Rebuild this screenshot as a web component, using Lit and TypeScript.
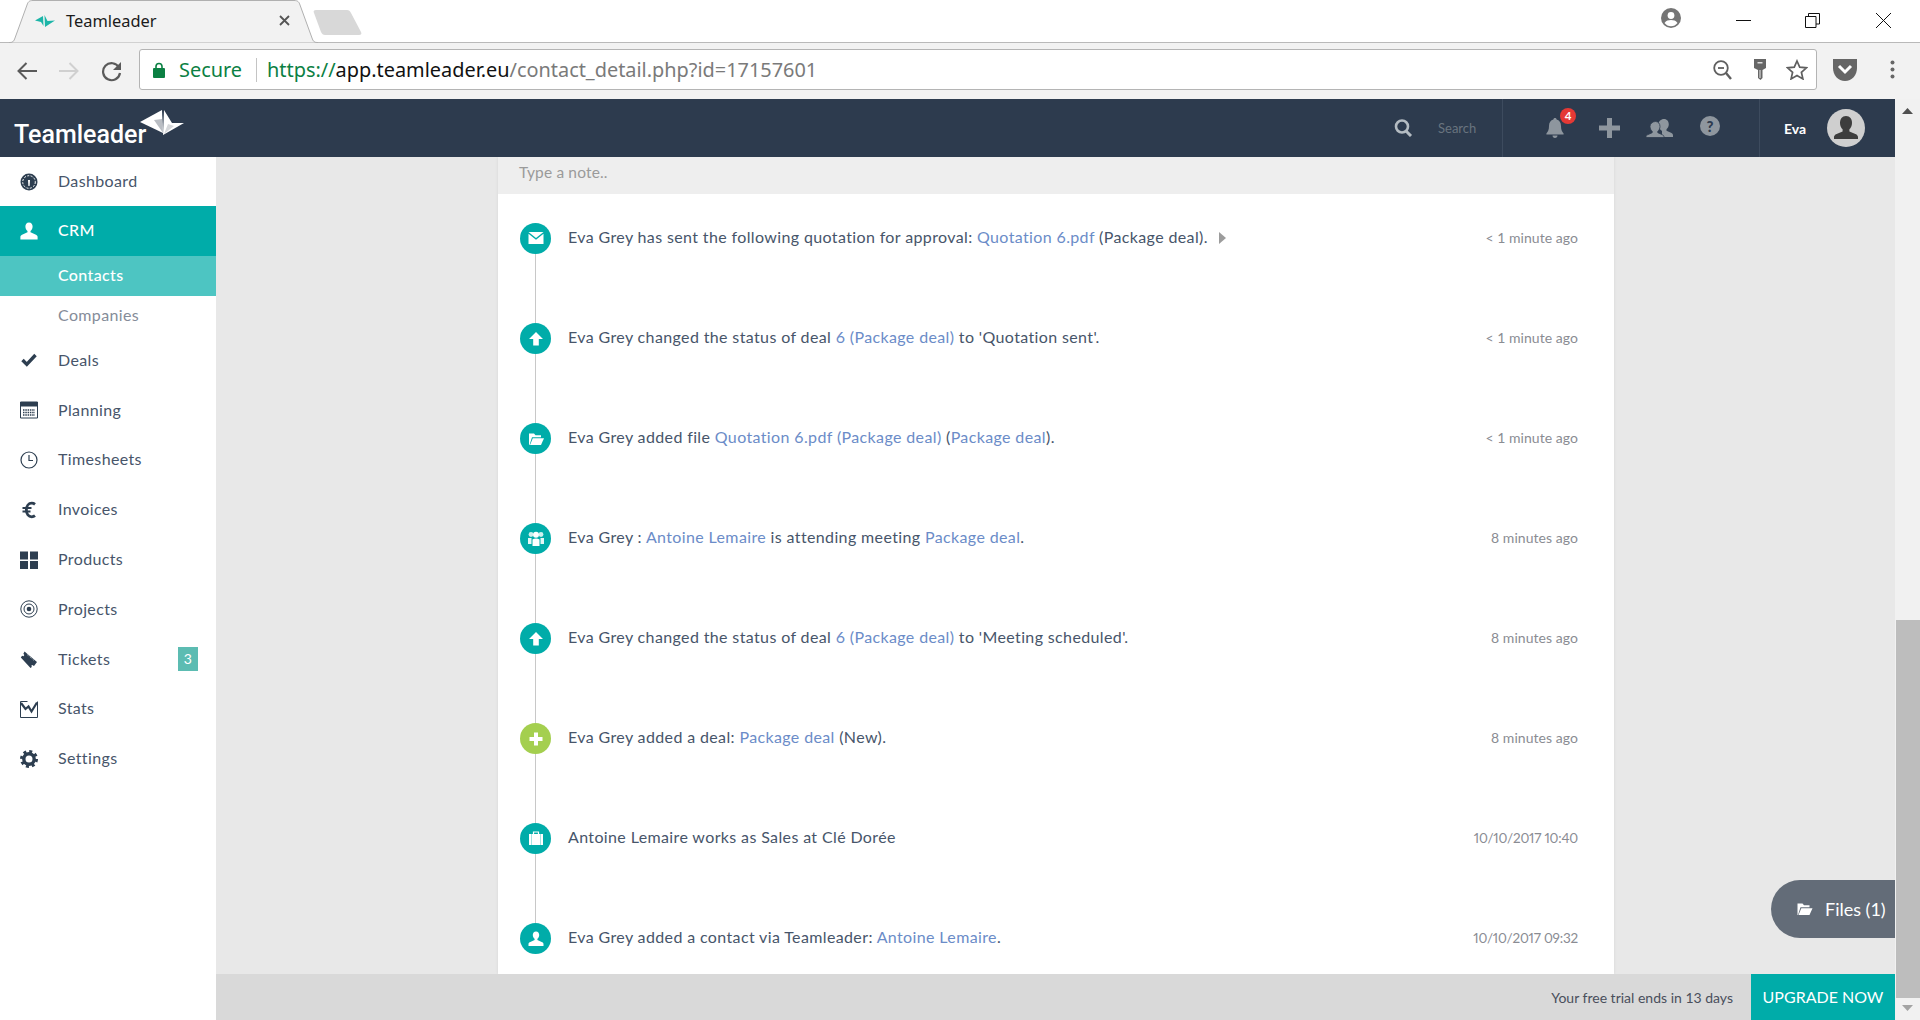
import { LitElement, html, svg, css } from 'lit';
import { customElement } from 'lit/decorators.js';

const navIcons: Record<string, unknown> = {
  dashboard: svg`<circle cx="9" cy="9" r="8.5" fill="currentColor"/><circle cx="9" cy="9" r="6.3" fill="none" stroke="#fff" stroke-width="1" stroke-dasharray="2 1.4"/><path d="M8 7h2l-.4 6h-1.2z" fill="#fff"/>`,
  user: svg`<path d="M9 0.5c2.4 0 3.6 1.8 3.6 4 0 2-1 3.6-2.1 4.4v1.3l5.5 2.6c1 .5 1.6 1.3 1.6 2.2v2.5H.4V15c0-.9.6-1.7 1.6-2.2l5.5-2.6V8.900C6.400 8.100 5.400 6.500 5.400 4.500c0-2.200 1.200-4 3.600-4z" fill="currentColor"/>`,
  check: svg`<path d="M2.500 9l4.300 4.400L15.500 4" fill="none" stroke="currentColor" stroke-width="3.400"/>`,
  planning: svg`<path d="M.5 1h17v16H.5z" fill="none" stroke="currentColor" stroke-width="1"/><path d="M0 1h18v4.500H0z" fill="currentColor"/><path d="M3 9h12M3 11.500h12M3 14h12" stroke="currentColor" stroke-width="1.400" stroke-dasharray="1.500 .8"/>`,
  clock: svg`<circle cx="9" cy="9" r="8" fill="none" stroke="currentColor" stroke-width="1.200"/><path d="M9 4v5.500h4" fill="none" stroke="currentColor" stroke-width="1.200"/>`,
  euro: svg`<path d="M15 3.300C14 2.500 13 2.200 11.800 2.200 8.600 2.200 6.400 5 6.400 9s2.200 6.800 5.400 6.800c1.200 0 2.300-.4 3.200-1.100" fill="none" stroke="currentColor" stroke-width="2.800"/><path d="M2.500 7h9M2.500 10.500h8" stroke="currentColor" stroke-width="1.800"/>`,
  grid: svg`<path d="M0 .5h8v8H0zM10 .5h8v8h-8zM0 10h8v8H0zM10 10h8v8h-8z" fill="currentColor"/>`,
  target: svg`<circle cx="9" cy="9" r="8.200" fill="none" stroke="currentColor" stroke-width="1"/><circle cx="9" cy="9" r="5" fill="none" stroke="currentColor" stroke-width="1"/><circle cx="9" cy="9" r="2.300" fill="currentColor"/>`,
  ticket: svg`<path d="M4.500 1.500l12.500 10.500-3 4-1.800-1-.8.600.4 1.400-1.300.900L.8 7.500l1.300-1.800 1.400.6.800-1.300-.9-1.300z" fill="currentColor"/><path d="M7 4.500l7 6" stroke="#fff" stroke-width=".6" stroke-dasharray="1 1"/>`,
  stats: svg`<path d="M.5 1.500V17.500H17.500V1.500" fill="none" stroke="currentColor" stroke-width="1"/><path d="M.5 1.500h7" stroke="currentColor" stroke-width="1"/><path d="M1 3l4.500 6 3-2.500 3 5 5.500-9" fill="none" stroke="currentColor" stroke-width="2.200"/>`,
  gear: svg`<circle cx="9" cy="9" r="7.400" fill="none" stroke="currentColor" stroke-width="3.200" stroke-dasharray="2.900 2.910"/><circle cx="9" cy="9" r="5.200" fill="none" stroke="currentColor" stroke-width="3.400"/>`,
};

const feedIcons: Record<string, unknown> = {
  mail: svg`<path d="M.5 1h15L8 7z" fill="#fff"/><path d="M.5 2.800V13h15V2.800L8 8.800z" fill="#fff"/>`,
  up: svg`<path d="M8 1l7 7h-4.200v6.500H5.200V8H1z" fill="#fff"/>`,
  folder: svg`<path d="M1 14V2.500h5l1.500 1.800H13v2H4L1.500 14z" fill="#fff"/><path d="M4.800 7.300H16L13 14H2z" fill="#fff"/>`,
  group: svg`<circle cx="3" cy="3.500" r="2.400" fill="#cdf0ee"/><circle cx="13" cy="3.500" r="2.400" fill="#cdf0ee"/><path d="M0 7h3.500v6H0zM12.500 7H16v6h-3.500z" fill="#e4f7f6"/><circle cx="8" cy="3.800" r="3" fill="#fff"/><path d="M4.500 8.500c1-.7 2.200-1 3.500-1s2.500.3 3.500 1V15h-7z" fill="#fff"/>`,
  plus: svg`<path d="M6 1.500h4V6h4.500v4H10v4.500H6V10H1.500V6H6z" fill="#fff"/>`,
  case: svg`<path d="M5.500 3V1h5v2" fill="none" stroke="#fff" stroke-width="1.200"/><path d="M1 3h14v11H1z" fill="#fff"/><path d="M3 3h1v11H3zM12 3h1v11h-1z" fill="#00aca9" opacity=".35"/>`,
  user: svg`<path d="M8 .5c2.100 0 3.200 1.600 3.200 3.500 0 1.800-.9 3.100-1.800 3.800v1.200l4.800 2.300c.9.400 1.300 1.100 1.300 1.900v1.800H.5v-1.800c0-.8.4-1.500 1.300-1.900l4.800-2.300V7.800C5.700 7.100 4.800 5.800 4.800 4 4.800 2.100 5.900.5 8 .5z" fill="#fff"/>`,
};

const link = (t: string) => html`<a class="link">${t}</a>`;

const menu = [
  { label: 'Deals', icon: 'check' },
  { label: 'Planning', icon: 'planning' },
  { label: 'Timesheets', icon: 'clock' },
  { label: 'Invoices', icon: 'euro' },
  { label: 'Products', icon: 'grid' },
  { label: 'Projects', icon: 'target' },
  { label: 'Tickets', icon: 'ticket', badge: '3' },
  { label: 'Stats', icon: 'stats' },
  { label: 'Settings', icon: 'gear' },
];

const feed = [
  { icon: 'mail', time: '< 1 minute ago', body: html`Eva Grey has sent the following quotation for approval: ${link('Quotation 6.pdf')} (Package deal).<span class="caret"></span>` },
  { icon: 'up', time: '< 1 minute ago', body: html`Eva Grey changed the status of deal ${link('6 (Package deal)')} to 'Quotation sent'.` },
  { icon: 'folder', time: '< 1 minute ago', body: html`Eva Grey added file ${link('Quotation 6.pdf (Package deal)')} (${link('Package deal')}).` },
  { icon: 'group', time: '8 minutes ago', body: html`Eva Grey : ${link('Antoine Lemaire')} is attending meeting ${link('Package deal')}.` },
  { icon: 'up', time: '8 minutes ago', body: html`Eva Grey changed the status of deal ${link('6 (Package deal)')} to 'Meeting scheduled'.` },
  { icon: 'plus', time: '8 minutes ago', green: true, body: html`Eva Grey added a deal: ${link('Package deal')} (New).` },
  { icon: 'case', time: '10/10/2017 10:40', date: true, body: html`Antoine Lemaire works as Sales at Clé Dorée` },
  { icon: 'user', time: '10/10/2017 09:32', date: true, body: html`Eva Grey added a contact via Teamleader: ${link('Antoine Lemaire')}.` },
];

@customElement('app-root')
export class AppRoot extends LitElement {
  static styles = css`
    :host {
      display: flex;
      flex-direction: column;
      width: 100%;
      height: 1020px;
      overflow: hidden;
      font-family: Lato, sans-serif;
      color: #47556a;
    }
    svg { display: block; flex: none; }

    .tabstrip {
      display: flex;
      height: 43px;
      flex: none;
      background: #fff;
      border-bottom: 1px solid #b9b9b9;
      box-sizing: border-box;
    }
    .tab {
      position: relative;
      width: 309px;
      height: 43px;
      margin-left: 9px;
      display: flex;
      align-items: center;
      padding: 0 28px 0 26px;
      box-sizing: border-box;
      font: 16.400px 'Noto Sans', sans-serif;
      color: #1b1b1b;
    }
    .tab-shape { position: absolute; left: 0; top: 0; }
    .favicon { position: relative; margin: -2px 11px 0 0; }
    .tab-title { position: relative; margin-top: -2px; flex: 1; }
    .tab-close { position: relative; margin-top: -2px; }
    .new-tab { margin: 10px 0 0 -5px; }
    .win { margin-left: auto; display: flex; padding-right: 29px; }
    .win-profile { margin: 8px 55px 0 0; }
    .win-min { margin: 13px 54px 0 0; }
    .win-restore { margin: 13px 56px 0 0; }
    .win-close { margin-top: 13px; }

    .toolbar {
      display: flex;
      align-items: center;
      height: 56px;
      flex: none;
      background: #f2f2f2;
      font: 19.900px 'Noto Sans', sans-serif;
      padding-left: 16px;
      box-sizing: border-box;
    }
    .tb-forward { margin-left: 22px; }
    .tb-reload { margin: 0 17px 0 21px; }
    .omnibox {
      display: flex;
      align-items: center;
      width: 1678px;
      height: 41px;
      background: #fff;
      border: 1px solid #b4b4b4;
      border-radius: 3px;
      box-sizing: border-box;
      padding-left: 13px;
      margin-top: -3px;
    }
    .secure { color: #0b8043; margin-left: 14px; }
    .omni-sep { width: 1px; height: 24px; background: #c4c4c4; margin: 0 10px 0 14px; }
    .scheme { color: #0b8043; }
    .host { color: #111; }
    .path { color: #7a7a7a; }
    .omni-right { margin-left: auto; display: flex; align-items: center; gap: 19px; padding-right: 8px; }
    .omni-zoom { margin-right: 2px; }
    .pocket { margin: -3px 0 0 16px; }
    .dots { margin: -3px 0 0 33px; }

    .body { flex: 1; display: flex; min-height: 0; }
    .app { flex: 1; display: flex; flex-direction: column; min-width: 0; }

    .header {
      display: flex;
      align-items: stretch;
      height: 58px;
      flex: none;
      background: #2d3b4e;
    }
    .logo {
      position: relative;
      width: 1380px;
      padding: 19px 0 0 14px;
      box-sizing: border-box;
      font: 500 25px/34px Roboto, sans-serif;
      color: #fff;
    }
    .logo-mark { position: absolute; left: 140px; top: 11px; }
    .search {
      width: 122px;
      display: flex;
      align-items: center;
      gap: 24px;
      padding-left: 14px;
      box-sizing: border-box;
      font-size: 13px;
      color: #69747f;
    }
    .actions {
      width: 258px;
      display: flex;
      align-items: center;
      border-left: 1px solid #3d4b5e;
      border-right: 1px solid #3d4b5e;
      padding-left: 43px;
      box-sizing: border-box;
      position: relative;
    }
    .bell { position: relative; margin-right: 35px; }
    .bell-badge {
      position: absolute;
      left: 14px;
      top: -10px;
      width: 16px;
      height: 16px;
      border-radius: 50%;
      background: #e53935;
      color: #fff;
      font: 700 11.500px/16px Lato, sans-serif;
      text-align: center;
    }
    .plus { margin-right: 26px; }
    .people { margin-right: 27px; }
    .help { margin-top: -5px; }
    .user {
      flex: 1;
      display: flex;
      align-items: center;
      padding-left: 24px;
      gap: 21px;
      color: #fff;
      font-size: 14px;
      font-weight: 700;
    }
    .avatar {
      width: 38px;
      height: 38px;
      border-radius: 50%;
      background: #cfcfcf;
      overflow: hidden;
    }

    .main { flex: 1; display: flex; min-height: 0; }
    .sidebar {
      width: 216px;
      flex: none;
      background: #fff;
      font-size: 16px;
      letter-spacing: 0.37px;
    }
    .label { margin-top: -2px; }
    .item {
      display: flex;
      align-items: center;
      height: 49.800px;
      padding: 0 18px 0 20px;
      color: #47556a;
    }
    .item svg { color: #2d3e50; margin-right: 20px; }
    .item.first { height: 49px; }
    .item.active { height: 50px; background: #00aca9; color: #fff; font-weight: 500; }
    .item.active svg { color: #fff; }
    .item.active .label, .sub.active .label { margin-top: -3px; }
    .sub { display: flex; align-items: center; height: 39.500px; padding-left: 58px; color: #858c99; }
    .sub.active { height: 40px; background: #4dc5c2; color: #fff; font-weight: 500; }
    .nav-badge {
      margin-left: auto;
      width: 20px;
      height: 24px;
      background: #5cbcb2;
      color: #fff;
      font-size: 14px;
      line-height: 24px;
      text-align: center;
    }

    .column { flex: 1; display: flex; flex-direction: column; min-width: 0; }
    .content {
      position: relative;
      flex: 1;
      min-height: 0;
      overflow: hidden;
      background: #e8e8e8;
      padding-left: 282px;
    }
    .panel {
      width: 1116px;
      height: 100%;
      background: #fff;
      box-shadow: 0 0 3px rgba(0, 0, 0, 0.08);
    }
    .note {
      height: 37px;
      background: #eee;
      padding-left: 21px;
      font-size: 15.500px;
      letter-spacing: 0.15px;
      line-height: 31px;
      color: #9a9a9a;
    }
    .feed { padding-top: 29px; }
    .row {
      position: relative;
      display: flex;
      height: 100px;
      padding: 0 36px 0 22px;
      font-size: 16px;
      letter-spacing: 0.37px;
      line-height: 31px;
    }
    .row:not(:last-child)::after {
      content: '';
      position: absolute;
      left: 37px;
      top: 31px;
      bottom: 0;
      width: 1px;
      background: #c8c8c8;
    }
    .dot {
      width: 31px;
      height: 31px;
      flex: none;
      border-radius: 50%;
      background: #00aca9;
      display: flex;
      align-items: center;
      justify-content: center;
      margin-right: 17px;
    }
    .dot.green { background: #a4cf4f; }
    .text { flex: 1; margin-top: -2px; white-space: nowrap; }
    .link { color: #6b8cc8; }
    .caret {
      display: inline-block;
      width: 0;
      height: 0;
      margin-left: 11px;
      border-left: 7px solid #9c9c9c;
      border-top: 6px solid transparent;
      border-bottom: 6px solid transparent;
      vertical-align: -1px;
    }
    .time {
      margin-top: -1px;
      color: #8a8c93;
      font-size: 14px;
      letter-spacing: 0.05px;
      white-space: nowrap;
    }
    .time.date { margin-top: 0; font-size: 13.500px; letter-spacing: -0.2px; font-variant-numeric: proportional-nums; }

    .files {
      position: absolute;
      right: 0;
      top: 723px;
      width: 124px;
      height: 58px;
      display: flex;
      align-items: center;
      box-sizing: border-box;
      padding-left: 25px;
      gap: 11px;
      background: #636c78;
      border-radius: 29px 0 0 29px;
      color: #fff;
      font-size: 18px;
    }
    .trial {
      display: flex;
      justify-content: flex-end;
      align-items: center;
      height: 46px;
      flex: none;
      background: #d9d9d9;
      font-size: 14px;
      color: #4a4f5c;
    }
    .upgrade {
      width: 144px;
      height: 100%;
      margin-left: 18px;
      background: #00aca9;
      color: #fff;
      font-size: 16px;
      line-height: 46px;
      text-align: center;
    }

    .scrollbar {
      width: 25px;
      flex: none;
      display: flex;
      flex-direction: column;
      background: #f1f1f1;
    }
    .sb-up { margin: 9px 0 0 7px; }
    .sb-thumb { margin: auto 0 0 1px; height: 378px; background: #bdbdbd; }
    .sb-down { margin: 7px 0 9px 7px; }
  `;

  render() {
    return html`
      <div class="tabstrip">
        <div class="tab">
          <svg class="tab-shape" width="309" height="43">
            <path d="M0 42.500H1C4 42.500 5 41 6 38L18 5C19 2 20 .5 24 .5H285C289 .5 290 2 291 5L303 38C304 41 305 42.500 308 42.500H309V43H0z" fill="#f2f2f2" stroke="#b0b0b0"/>
          </svg>
          <svg class="favicon" width="20" height="12" viewBox="0 0 20 12">
            <path d="M0 5.500L8 1l.5 10L6 7z" fill="#1cb5a8"/><path d="M9.500 0L12.500 6 20 5.500 10 12z" fill="#1cb5a8"/>
          </svg>
          <span class="tab-title">Teamleader</span>
          <svg class="tab-close" width="11" height="11"><path d="M1 1l9 9M10 1l-9 9" stroke="#555" stroke-width="1.800"/></svg>
        </div>
        <svg class="new-tab" width="50" height="26">
          <path d="M3 0H34C36 0 37 1 38 3L48 22C49 24 48 25 46 25H12C10 25 9 24 8 22L1 3C0 1 1 0 3 0z" fill="#d8d8d8"/>
        </svg>
        <div class="win">
          <svg class="win-profile" width="20" height="20">
            <circle cx="10" cy="10" r="10" fill="#757575"/><circle cx="10" cy="7.500" r="3.400" fill="#fff"/><path d="M3.500 15c1.500-2.400 4-3 6.500-3s5 .6 6.500 3c-1.500 2-4 3.300-6.500 3.300S5 17 3.500 15z" fill="#fff"/>
          </svg>
          <svg class="win-min" width="15" height="15"><path d="M0 7.500h15" stroke="#111"/></svg>
          <svg class="win-restore" width="15" height="15">
            <path d="M.5 3.500h10.500v11H.5zM3.500 3V.5h11V11H11" fill="none" stroke="#111"/>
          </svg>
          <svg class="win-close" width="15" height="15"><path d="M0 0l15 15M15 0L0 15" stroke="#111"/></svg>
        </div>
      </div>

      <div class="toolbar">
        <svg width="21" height="20" viewBox="0 0 21 20"><path d="M21 10H3M10.500 2L2.500 10l8 8" fill="none" stroke="#5a5a5a" stroke-width="2"/></svg>
        <svg class="tb-forward" width="21" height="20" viewBox="0 0 21 20"><path d="M0 10h18M10.500 2l8 8-8 8" fill="none" stroke="#d0d0d0" stroke-width="2"/></svg>
        <svg class="tb-reload" width="21" height="21" viewBox="0 0 21 21">
          <path d="M18 6.500A8.500 8.500 0 1 0 19 12" fill="none" stroke="#5a5a5a" stroke-width="2.200"/><path d="M20 1v8h-8z" fill="#5a5a5a"/>
        </svg>
        <div class="omnibox">
          <svg width="12" height="16" viewBox="0 0 12 16">
            <path d="M3 6.500V4.500a3 3 0 0 1 6 0v2" fill="none" stroke="#0b8043" stroke-width="1.600"/><rect y="6" width="12" height="10" rx="1" fill="#0b8043"/>
          </svg>
          <span class="secure">Secure</span>
          <span class="omni-sep"></span>
          <span><span class="scheme">https://</span><span class="host">app.teamleader.eu</span><span class="path">/contact_detail.php?id=17157601</span></span>
          <div class="omni-right">
            <svg class="omni-zoom" width="19" height="20" viewBox="0 0 19 20">
              <circle cx="8" cy="8" r="6.800" fill="none" stroke="#5f5f5f" stroke-width="1.800"/><path d="M5 8h6" stroke="#5f5f5f" stroke-width="1.800"/><path d="M13 13l5 6" stroke="#5f5f5f" stroke-width="2.400"/>
            </svg>
            <svg width="14" height="21" viewBox="0 0 14 21">
              <path d="M1 0h12v9l-3.500 2v8L7.500 21 5 19v-8L1 9z" fill="#666"/><path d="M4.500 3h5v1.500h-5z" fill="#ddd"/><path d="M7 11v8" stroke="#eee"/>
            </svg>
            <svg width="22" height="21" viewBox="0 0 22 21">
              <path d="M11 2l2.700 6.200 6.800.6-5.100 4.500 1.500 6.600L11 16.400l-5.900 3.500 1.500-6.600L1.500 8.800l6.800-.6z" fill="none" stroke="#5f5f5f" stroke-width="1.700"/>
            </svg>
          </div>
        </div>
        <svg class="pocket" width="24" height="22" viewBox="0 0 24 22">
          <path d="M0 0h24v9c0 7-5 13-12 13S0 16 0 9z" fill="#666"/><path d="M6 7l6 6 6-6" fill="none" stroke="#fff" stroke-width="3"/>
        </svg>
        <svg class="dots" width="5" height="19" viewBox="0 0 5 19">
          <circle cx="2.500" cy="2.500" r="2" fill="#666"/><circle cx="2.500" cy="9.500" r="2" fill="#666"/><circle cx="2.500" cy="16.500" r="2" fill="#666"/>
        </svg>
      </div>

      <div class="body">
        <div class="app">
          <div class="header">
            <div class="logo">
              Teamleader
              <svg class="logo-mark" width="44" height="26" viewBox="0 0 44 26">
                <path d="M0 12L22 0l1 23z" fill="#fff"/><path d="M14 10l8-1 1 14z" fill="#b9bdc3"/>
                <path d="M24 0l8 13h12L23 25z" fill="#fff"/><path d="M28 14l-4 10 10-8z" fill="#d5d7da"/>
              </svg>
            </div>
            <div class="search">
              <svg width="20" height="18" viewBox="0 0 20 18">
                <circle cx="8" cy="7.500" r="6" fill="none" stroke="#b4bcc2" stroke-width="2.600"/><path d="M12 12l5 5" stroke="#b4bcc2" stroke-width="3"/>
              </svg>
              Search
            </div>
            <div class="actions">
              <div class="bell">
                <svg width="18" height="20" viewBox="0 0 18 20">
                  <path d="M9 0c1 0 1.600.6 1.600 1.600C13.300 2.300 15 4.700 15 8c0 4 1 5.500 2.600 7.500v1H.4v-1C2 13.500 3 12 3 8c0-3.300 1.700-5.700 4.400-6.400C7.400.6 8 0 9 0zM6.500 17.500h5c0 1.400-1 2.400-2.500 2.400s-2.500-1-2.500-2.400z" fill="#8e969e"/>
                </svg>
                <span class="bell-badge">4</span>
              </div>
              <svg class="plus" width="21" height="20"><path d="M8 0h5v7.500h8v5h-8V20H8v-7.500H0v-5h8z" fill="#8e969e"/></svg>
              <svg class="people" width="27" height="19" viewBox="0 0 27 19">
                <path d="M18 0c3 0 4.800 2.300 4.800 5.200 0 2.300-1 4-2.300 5v1.600l4.500 2c1.200.6 2 1.500 2 2.600V18H16v-6l-2-1.800c-1-1-1.500-2.800-1.500-5C12.500 2.300 15 0 18 0z" fill="#8e969e"/>
                <path d="M9.500 2.500c2.800 0 4.500 2.200 4.500 5 0 2.200-1 3.800-2.200 4.700v1.500l4.700 2.100c.9.400 1.500 1.100 1.500 2.200v.5H0v-.5c0-1.100.6-1.800 1.500-2.200l4.700-2.100v-1.500C5 11.300 4 9.700 4 7.500c0-2.800 2.700-5 5.500-5z" fill="#8e969e" stroke="#2d3b4e" stroke-width=".8"/>
              </svg>
              <svg class="help" width="20" height="20" viewBox="0 0 20 20">
                <circle cx="10" cy="10" r="10" fill="#8e969e"/>
                <text x="10" y="15.500" text-anchor="middle" font-family="Lato" font-weight="900" font-size="15" fill="#2d3b4e">?</text>
              </svg>
            </div>
            <div class="user">
              Eva
              <div class="avatar">
                <svg width="38" height="38" viewBox="0 0 38 38">
                  <path d="M19 7c4 0 6 3 6 7 0 3-1.200 5-2.600 6.200v2.300l6 2.500c1.800.7 2.600 2 2.600 3V30H7v-2c0-1 .8-2.300 2.600-3l6-2.500v-2.300C14.200 19 13 17 13 14c0-4 2-7 6-7z" fill="#3d3d3d"/>
                </svg>
              </div>
            </div>
          </div>

          <div class="main">
            <nav class="sidebar">
              <div class="item first">
                <svg width="18" height="18" viewBox="0 0 18 18">${navIcons.dashboard}</svg><span class="label">Dashboard</span>
              </div>
              <div class="item active">
                <svg width="18" height="18" viewBox="0 0 18 18">${navIcons.user}</svg><span class="label">CRM</span>
              </div>
              <div class="sub active"><span class="label">Contacts</span></div>
              <div class="sub"><span class="label">Companies</span></div>
              ${menu.map(
                (m) => html`<div class="item">
                  <svg width="18" height="18" viewBox="0 0 18 18">${navIcons[m.icon]}</svg><span class="label">${m.label}</span>
                  ${m.badge ? html`<span class="nav-badge">${m.badge}</span>` : ''}
                </div>`
              )}
            </nav>
            <div class="column">
              <div class="content">
                <div class="panel">
                  <div class="note">Type a note..</div>
                  <div class="feed">
                    ${feed.map(
                      (f) => html`<div class="row">
                        <span class="dot ${f.green ? 'green' : ''}">
                          <svg width="16" height="16" viewBox="0 0 16 16">${feedIcons[f.icon]}</svg>
                        </span>
                        <div class="text">${f.body}</div>
                        <div class="time ${f.date ? 'date' : ''}">${f.time}</div>
                      </div>`
                    )}
                  </div>
                </div>
                <div class="files">
                  <svg width="18" height="16" viewBox="0 0 17 16">${feedIcons.folder}</svg>
                  Files (1)
                </div>
              </div>
              <div class="trial">
                Your free trial ends in 13 days
                <div class="upgrade">UPGRADE NOW</div>
              </div>
            </div>
          </div>
        </div>
        <div class="scrollbar">
          <svg class="sb-up" width="11" height="6"><path d="M5.500 0L11 6H0z" fill="#505050"/></svg>
          <div class="sb-thumb"></div>
          <svg class="sb-down" width="11" height="6"><path d="M0 0h11L5.500 6z" fill="#a3a3a3"/></svg>
        </div>
      </div>
    `;
  }
}
